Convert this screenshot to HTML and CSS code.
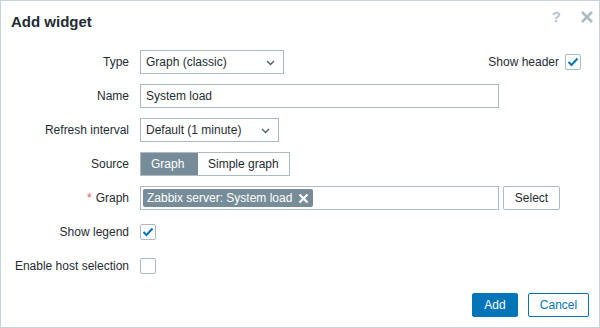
FILE: index.html
```html
<!DOCTYPE html>
<html>
<head>
    <title>Add widget</title>
    <link rel="stylesheet" href="styles.css">
</head>
<body>
<div class="dialog">
    <div class="dialog-head">
        <h4>Add widget</h4>
        <div class="head-tools">
            <span class="btn-help">?</span>
            <svg class="btn-close" width="14" height="14" viewBox="0 0 14 14"><path d="M2 2 L12 12 M12 2 L2 12" stroke="#acbbc2" stroke-width="2.6"/></svg>
        </div>
    </div>

    <div class="form">
        <label class="label">Type</label>
        <div class="field field-split">
            <div class="select w-type">Graph (classic)
                <svg class="arrow" width="9" height="6" viewBox="0 0 9 6"><path d="M1 1 L4.5 4.5 L8 1" fill="none" stroke="#4f5b62" stroke-width="1.3"/></svg>
            </div>
            <div class="show-header">
                <span>Show header</span>
                <span class="checkbox checked">
                    <svg width="12" height="10" viewBox="0 0 12 10"><path d="M1.5 5 L4.5 8 L10.5 1.5" fill="none" stroke="#0275b8" stroke-width="2"/></svg>
                </span>
            </div>
        </div>

        <label class="label">Name</label>
        <div class="field">
            <div class="input w-name">System load</div>
        </div>

        <label class="label">Refresh interval</label>
        <div class="field">
            <div class="select w-refresh">Default (1 minute)
                <svg class="arrow" width="9" height="6" viewBox="0 0 9 6"><path d="M1 1 L4.5 4.5 L8 1" fill="none" stroke="#4f5b62" stroke-width="1.3"/></svg>
            </div>
        </div>

        <label class="label">Source</label>
        <div class="field">
            <div class="segmented">
                <span class="seg active">Graph</span>
                <span class="seg">Simple graph</span>
            </div>
        </div>

        <label class="label"><span class="req">*</span> Graph</label>
        <div class="field">
            <div class="multiselect">
                <span class="tag">Zabbix server: System load
                    <svg width="11" height="11" viewBox="0 0 11 11"><path d="M1.5 1.5 L9.5 9.5 M9.5 1.5 L1.5 9.5" stroke="#fff" stroke-width="2.3"/></svg>
                </span>
            </div>
            <button class="btn-alt">Select</button>
        </div>

        <label class="label">Show legend</label>
        <div class="field">
            <span class="checkbox checked">
                <svg width="12" height="10" viewBox="0 0 12 10"><path d="M1.5 5 L4.5 8 L10.5 1.5" fill="none" stroke="#0275b8" stroke-width="2"/></svg>
            </span>
        </div>

        <label class="label">Enable host selection</label>
        <div class="field">
            <span class="checkbox"></span>
        </div>
    </div>

    <div class="dialog-foot">
        <button class="btn-primary">Add</button>
        <button class="btn-outline">Cancel</button>
    </div>
</div>
</body>
</html>
```

FILE: styles.css
```css
body { margin: 0; font-family: "Liberation Sans", Arial, sans-serif; font-size: 12px; color: #1f2c33; background: #fff; }
.dialog { width: 600px; height: 328px; box-sizing: border-box; border: 1px solid #c8d2d7; background: #fff; display: flex; flex-direction: column; }

.dialog-head { display: flex; justify-content: space-between; padding: 12px 5px 0 10px; height: 30px; box-sizing: border-box; }
.dialog-head h4 { margin: 0; font-size: 15px; line-height: 18px; font-weight: bold; color: #1f2c33; }
.head-tools { display: flex; align-items: flex-start; gap: 19px; margin-top: -5px; }
.btn-help { color: #b8c3c9; font-size: 15px; font-weight: bold; line-height: 18px; }
.btn-close { margin-top: 2px; }

.form { display: grid; grid-template-columns: 128px 1fr; column-gap: 11px; row-gap: 10px; margin-top: 19px; padding-right: 18px; }
.label { display: flex; align-items: center; justify-content: flex-end; height: 24px; white-space: nowrap; }
.req { color: #e45959; margin-right: 4px; }
.field { display: flex; align-items: center; height: 24px; }
.field-split { justify-content: space-between; }

.select, .input, .multiselect { height: 24px; box-sizing: border-box; border: 1px solid #acbbc2; background: #fff; display: flex; align-items: center; padding: 0 5px; position: relative; }
.select .arrow { position: absolute; right: 8px; top: 9px; }
.w-type { width: 144px; }
.w-name { width: 359px; }
.w-refresh { width: 139px; }

.show-header { display: flex; align-items: center; gap: 6px; }

.segmented { display: flex; height: 24px; box-sizing: border-box; border: 1px solid #acbbc2; }
.seg { display: flex; align-items: center; padding: 0 10px; }
.seg.active { background: #768d99; color: #fff; width: 37px; }

.multiselect { width: 359px; padding: 0 2px; }
.tag { display: flex; align-items: center; gap: 6px; height: 18px; background: #768d99; color: #fff; padding: 0 4px; border-radius: 2px; }
.btn-alt { margin-left: 4px; height: 24px; width: 57px; border: 1px solid #acbbc2; background: #fff; color: #1f2c33; font: inherit; border-radius: 2px; padding: 0; }

.checkbox { display: flex; align-items: center; justify-content: center; width: 16px; height: 16px; box-sizing: border-box; border: 1px solid #acbbc2; border-radius: 2px; background: #fff; }

.dialog-foot { margin-top: auto; display: flex; justify-content: flex-end; gap: 10px; padding: 0 10px 10px 0; }
.dialog-foot button { height: 24px; font: inherit; border-radius: 2px; padding: 0; }
.btn-primary { width: 46px; background: #0275b8; border: 1px solid #0275b8; color: #fff; }
.btn-outline { width: 61px; background: #fff; border: 1px solid #0275b8; color: #0275b8; }
```
